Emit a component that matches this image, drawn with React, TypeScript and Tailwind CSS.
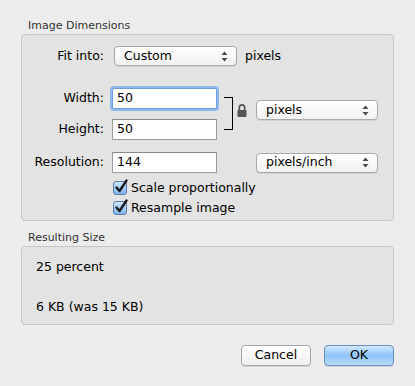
import React from 'react';

const FONT = { fontFamily: '"DejaVu Sans", "Liberation Sans", sans-serif' };

const Arrows = () => (
  <svg width="7" height="11" viewBox="0 0 7 11" className="shrink-0">
    <path d="M3.5 0.5 L6.5 4 L0.5 4 Z" fill="#4a4a4a" />
    <path d="M3.5 10.5 L6.5 7 L0.5 7 Z" fill="#4a4a4a" />
  </svg>
);

const Popup = ({ label, width }: { label: string; width: string }) => (
  <div
    className={`${width} h-[20px] flex items-center justify-between pl-[9px] pr-[8px] rounded-[4px] border border-[#a9a9a9] bg-gradient-to-b from-[#ffffff] to-[#f1f1f1] shadow-[0_1px_0_rgba(0,0,0,0.08)] text-[12.5px] text-black`}
  >
    <span>{label}</span>
    <Arrows />
  </div>
);

const TextField = ({ value, focused = false }: { value: string; focused?: boolean }) => (
  <div
    className={`w-[105px] h-[21px] flex items-center pl-[4px] bg-white text-[12.5px] text-black border ${
      focused
        ? 'border-[#6d9fd8] shadow-[0_0_0_2px_#8fb9ec] rounded-[2px]'
        : 'border-[#9b9b9b] border-t-[#8a8a8a]'
    }`}
  >
    {value}
  </div>
);

const Check = ({ label }: { label: string }) => (
  <div className="flex items-center gap-[4px] h-[16px]">
    <div className="w-[14px] h-[14px] rounded-[3px] border border-[#5b7fa8] bg-gradient-to-b from-[#cfe5fb] to-[#7db4ef] flex items-center justify-center">
      <svg width="14" height="15" viewBox="0 0 14 15" className="-mt-[3px] ml-[1px] overflow-visible">
        <path d="M2.5 8.5 L5.5 12 L12.5 1.5" fill="none" stroke="#1a1a1a" strokeWidth="2.4" strokeLinecap="round" strokeLinejoin="round" />
      </svg>
    </div>
    <span className="text-[12.5px] text-black">{label}</span>
  </div>
);

const Label = ({ children }: { children: React.ReactNode }) => (
  <div className="w-[82px] text-right text-[12.5px] text-black shrink-0">{children}</div>
);

export default function App() {
  return (
    <div style={FONT} className="w-[415px] h-[386px] bg-[#ececec] px-[21px] pt-[18px]">
      <div className="text-[11px] text-[#333] pl-[7px] h-[16px] leading-[16px]">Image Dimensions</div>
      <div className="h-[187px] rounded-[4px] border border-[#c6c6c6] bg-[#e3e3e3] pt-[11px]">
        <div className="flex items-center h-[20px] gap-[8px]">
          <Label>Fit into:</Label>
          <div className="ml-[2px]">
            <Popup label="Custom" width="w-[123px]" />
          </div>
          <span className="text-[12.5px] text-black">pixels</span>
        </div>

        <div className="flex items-start mt-[21px]">
          <div className="flex flex-col gap-[10px]">
            <div className="flex items-center gap-[8px] h-[22px]">
              <Label>Width:</Label>
              <TextField value="50" focused />
            </div>
            <div className="flex items-center gap-[8px] h-[21px]">
              <Label>Height:</Label>
              <TextField value="50" />
            </div>
          </div>
          <div className="mt-[10px] ml-[7px] w-[9px] h-[33px] border-t border-r border-b border-black" />
          <svg width="10" height="13" viewBox="0 0 10 13" className="ml-[4px] mt-[17px]">
            <path d="M2.3 6 V3.6 a2.7 2.7 0 0 1 5.4 0 V6" fill="none" stroke="#555" strokeWidth="1.7" />
            <rect x="0.5" y="6" width="9" height="7" rx="1" fill="#555" />
          </svg>
          <div className="ml-[9px] mt-[13px]">
            <Popup label="pixels" width="w-[122px]" />
          </div>
        </div>

        <div className="flex items-center mt-[12px] h-[21px]">
          <div className="flex items-center gap-[8px]">
            <Label>Resolution:</Label>
            <TextField value="144" />
          </div>
          <div className="ml-[39px]">
            <Popup label="pixels/inch" width="w-[122px]" />
          </div>
        </div>

        <div className="flex flex-col gap-[4px] mt-[7px] ml-[91px]">
          <Check label="Scale proportionally" />
          <Check label="Resample image" />
        </div>
      </div>

      <div className="text-[11px] text-[#333] pl-[7px] h-[16px] leading-[16px] mt-[9px]">Resulting Size</div>
      <div className="h-[79px] rounded-[4px] border border-[#c6c6c6] bg-[#e3e3e3] pl-[14px] pt-[11px] text-[12.5px] text-black">
        <div className="h-[18px] leading-[18px]">25 percent</div>
        <div className="h-[18px] leading-[18px] mt-[22px]">6 KB (was 15 KB)</div>
      </div>

      <div className="flex justify-end gap-[13px] mt-[20px]">
        <button className="w-[70px] h-[21px] rounded-[4px] border border-[#a5a5a5] bg-gradient-to-b from-[#ffffff] to-[#eeeeee] text-[12.5px] text-black shadow-[0_1px_0_rgba(0,0,0,0.1)]">
          Cancel
        </button>
        <button className="w-[70px] h-[21px] rounded-[4px] border border-[#6c8fc2] bg-gradient-to-b from-[#d2e8fc] via-[#8ec4f7] to-[#b8dcfb] text-[12.5px] text-black shadow-[0_1px_0_rgba(0,0,0,0.1)]">
          OK
        </button>
      </div>
    </div>
  );
}
